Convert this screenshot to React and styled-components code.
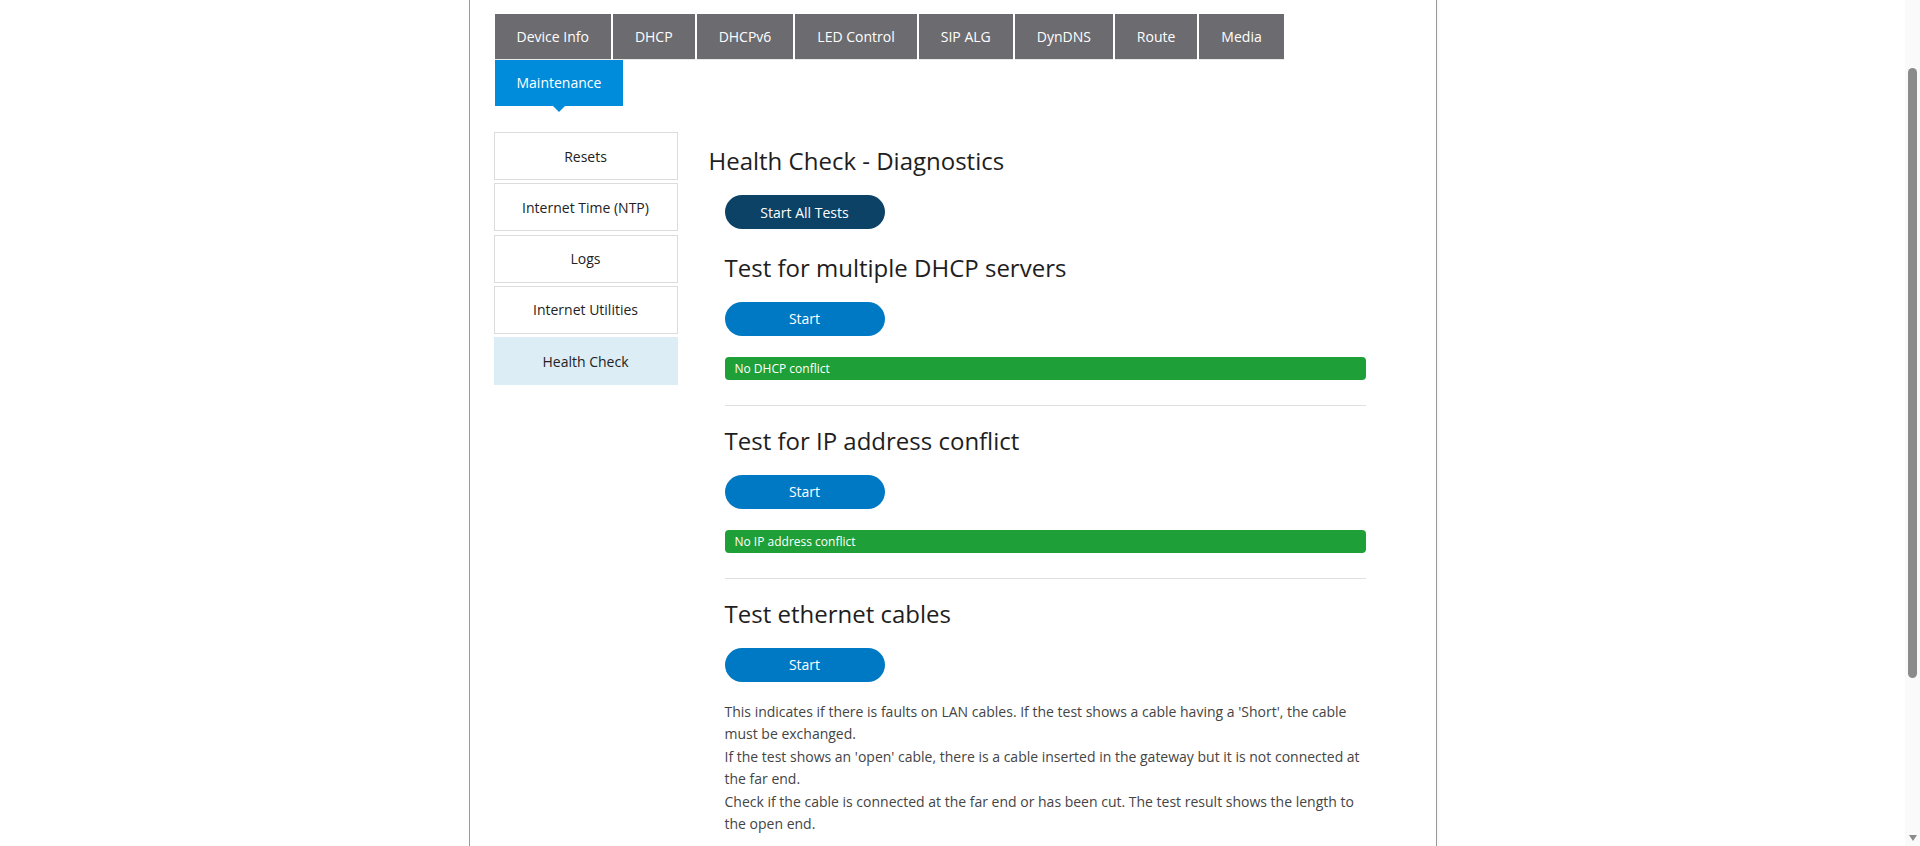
import React from "react";
import styled, { createGlobalStyle } from "styled-components";

const GlobalStyle = createGlobalStyle`
  html, body { margin: 0; padding: 0; background: #ffffff; }
  body {
    font-family: "Open Sans", "Liberation Sans", sans-serif;
    color: #222;
    padding-right: 15px;
  }
  * { box-sizing: border-box; }
`;

const Page = styled.div`
  width: 968px;
  min-height: 1060px;
  margin: 0 auto;
  padding: 14px 24px 24px;
  border-left: 1px solid #9a9a9a;
  border-right: 1px solid #9a9a9a;
  box-shadow: 2px 0 2px rgba(0, 0, 0, 0.03);
  background: #fff;
`;

const TabBar = styled.nav`
  display: flex;
  flex-wrap: wrap;
  max-width: 800px;
  margin-left: 1px;
`;

const Tab = styled.div`
  position: relative;
  height: 46px;
  line-height: 45px;
  padding: 0 22px;
  margin-right: 2px;
  font-size: 14px;
  color: #fff;
  white-space: nowrap;
  background: ${(p) => (p.$active ? "#008bdb" : "#6c6b70")};
  border-bottom: 1px solid ${(p) => (p.$active ? "#008bdb" : "#e8e8e8")};
  cursor: pointer;

  ${(p) =>
    p.$active &&
    `
    &::after {
      content: "";
      position: absolute;
      left: 50%;
      top: 100%;
      margin-left: -7px;
      border-left: 7px solid transparent;
      border-right: 7px solid transparent;
      border-top: 7px solid #008bdb;
    }
  `}
`;

const Body = styled.div`
  display: flex;
  gap: 31px;
  margin-top: 26px;
`;

const SideNav = styled.div`
  width: 184px;
  flex: 0 0 184px;
  display: flex;
  flex-direction: column;
  gap: 3.25px;
`;

const SideItem = styled.div`
  height: 48px;
  display: flex;
  align-items: center;
  justify-content: center;
  font-size: 14px;
  color: #222;
  border: 1px solid ${(p) => (p.$active ? "#dcedf6" : "#dcdcdc")};
  background: ${(p) => (p.$active ? "#dcedf6" : "#fff")};
  cursor: pointer;
`;

const Main = styled.main`
  flex: 1;
  padding-top: 12px;
`;

const Title = styled.h1`
  margin: 0;
  font-size: 24px;
  font-weight: 400;
  line-height: 33px;
  color: #1e1e1e;
`;

const Section = styled.section`
  padding: 0 46px 0 16px;
`;

const PillButton = styled.button`
  display: block;
  width: 160px;
  height: 34px;
  margin-top: ${(p) => p.$mt}px;
  border: none;
  border-radius: 17px;
  font-family: "Open Sans", "Liberation Sans", sans-serif;
  font-size: 14px;
  color: #fff;
  background: ${(p) => (p.$dark ? "#0b4266" : "#0079c5")};
  cursor: pointer;
  padding: 0;
`;

const TestTitle = styled.h2`
  margin: ${(p) => p.$mt}px 0 0;
  font-size: 24px;
  font-weight: 400;
  line-height: 33px;
  color: #1e1e1e;
`;

const StatusBar = styled.div`
  margin-top: 21px;
  height: 23px;
  line-height: 23px;
  padding-left: 10px;
  border-radius: 4px;
  background: #1f9f37;
  color: #fff;
  font-size: 12px;
`;

const Divider = styled.hr`
  margin: 25px 0 0;
  border: none;
  border-top: 1px solid #e0e0e0;
  height: 0;
`;

const Note = styled.p`
  margin: 19px 0 0;
  font-size: 14px;
  line-height: 22.5px;
  color: #444;
`;

/* Browser scrollbar, drawn over the page edge */
const ScrollTrack = styled.div`
  position: fixed;
  top: 0;
  right: 0;
  width: 15px;
  height: 100vh;
  background: #fafafa;
`;

const ScrollThumb = styled.div`
  position: absolute;
  top: 68px;
  left: 3px;
  width: 9px;
  height: 610px;
  border-radius: 5px;
  background: #8b8b8b;
`;

const ScrollArrow = styled.div`
  position: absolute;
  bottom: 5px;
  left: 3.5px;
  border-left: 4px solid transparent;
  border-right: 4px solid transparent;
  border-top: 6px solid #8b8b8b;
`;

const tabs = ["Device Info", "DHCP", "DHCPv6", "LED Control", "SIP ALG", "DynDNS", "Route", "Media", "Maintenance"];
const sideItems = ["Resets", "Internet Time (NTP)", "Logs", "Internet Utilities", "Health Check"];

export default function App() {
  return (
    <>
      <GlobalStyle />
      <Page>
        <TabBar>
          {tabs.map((t) => (
            <Tab key={t} $active={t === "Maintenance"}>
              {t}
            </Tab>
          ))}
        </TabBar>
        <Body>
          <SideNav>
            {sideItems.map((s) => (
              <SideItem key={s} $active={s === "Health Check"}>
                {s}
              </SideItem>
            ))}
          </SideNav>
          <Main>
            <Title>Health Check - Diagnostics</Title>
            <Section>
              <PillButton $dark $mt={18}>Start All Tests</PillButton>

              <TestTitle $mt={21.5}>Test for multiple DHCP servers</TestTitle>
              <PillButton $mt={18}>Start</PillButton>
              <StatusBar>No DHCP conflict</StatusBar>
              <Divider />

              <TestTitle $mt={18}>Test for IP address conflict</TestTitle>
              <PillButton $mt={18}>Start</PillButton>
              <StatusBar>No IP address conflict</StatusBar>
              <Divider />

              <TestTitle $mt={18}>Test ethernet cables</TestTitle>
              <PillButton $mt={18}>Start</PillButton>
              <Note>
                This indicates if there is faults on LAN cables. If the test shows a cable having a 'Short', the cable must be exchanged.
                <br />
                If the test shows an 'open' cable, there is a cable inserted in the gateway but it is not connected at the far end.
                <br />
                Check if the cable is connected at the far end or has been cut. The test result shows the length to the open end.
              </Note>
            </Section>
          </Main>
        </Body>
      </Page>
      <ScrollTrack>
        <ScrollThumb />
        <ScrollArrow />
      </ScrollTrack>
    </>
  );
}
